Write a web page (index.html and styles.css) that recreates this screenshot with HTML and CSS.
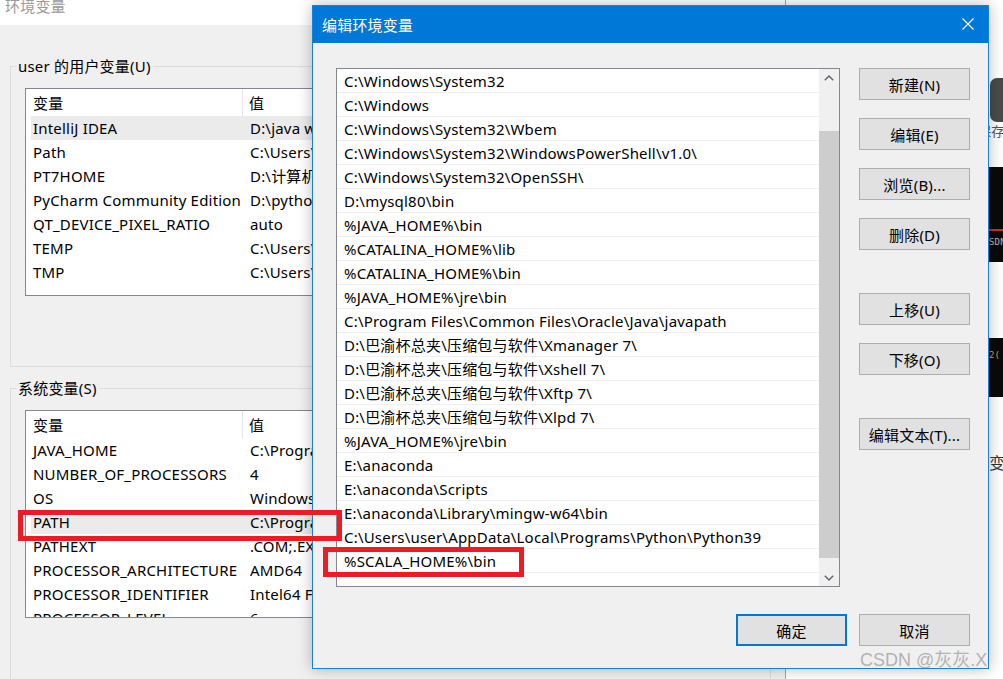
FILE: index.html
```html
<!DOCTYPE html>
<html lang="zh-CN">
<head>
<meta charset="utf-8">
<title>编辑环境变量</title>
<link rel="stylesheet" href="styles.css">
</head>
<body>
<div class="desk">

  <section class="envwin">
    <div class="envwin-title">环境变量</div>
    <div class="envwin-body">
      <div class="group group-user">
        <div class="group-label">user 的用户变量(U)</div>
        <div class="lv">
          <div class="lv-head"><span class="c1">变量</span><span class="c2">值</span></div>
          <div class="lv-row sel"><span class="c1">IntelliJ IDEA</span><span class="c2">D:\java  work\IntelliJ IDEA 2021.2\bin;</span></div>
          <div class="lv-row"><span class="c1">Path</span><span class="c2">C:\Users\user\AppData\Local\Microsoft\WindowsApps;</span></div>
          <div class="lv-row"><span class="c1">PT7HOME</span><span class="c2">D:\计算机网络\Cisco Packet Tracer 7.2.2</span></div>
          <div class="lv-row"><span class="c1">PyCharm Community Edition</span><span class="c2">D:\python\PyCharm Community Edition 2021.1\bin;</span></div>
          <div class="lv-row"><span class="c1">QT_DEVICE_PIXEL_RATIO</span><span class="c2">auto</span></div>
          <div class="lv-row"><span class="c1">TEMP</span><span class="c2">C:\Users\user\AppData\Local\Temp</span></div>
          <div class="lv-row"><span class="c1">TMP</span><span class="c2">C:\Users\user\AppData\Local\Temp</span></div>
        </div>
      </div>

      <div class="group group-sys">
        <div class="group-label">系统变量(S)</div>
        <div class="lv lv-sys">
          <div class="lv-head"><span class="c1">变量</span><span class="c2">值</span></div>
          <div class="lv-row"><span class="c1">JAVA_HOME</span><span class="c2">C:\Program Files\Java\jdk1.8.0_291</span></div>
          <div class="lv-row"><span class="c1">NUMBER_OF_PROCESSORS</span><span class="c2">4</span></div>
          <div class="lv-row"><span class="c1">OS</span><span class="c2">Windows_NT</span></div>
          <div class="lv-row sel"><span class="c1">PATH</span><span class="c2">C:\Program Files\Common Files\Oracle\Java\javapath;</span></div>
          <div class="lv-row"><span class="c1">PATHEXT</span><span class="c2">.COM;.EXE;.BAT;.CMD;.VBS;.VBE;.JS;.JSE;.WSF;.WSH;.MSC</span></div>
          <div class="lv-row"><span class="c1">PROCESSOR_ARCHITECTURE</span><span class="c2">AMD64</span></div>
          <div class="lv-row"><span class="c1">PROCESSOR_IDENTIFIER</span><span class="c2">Intel64 Family 6 Model 142 Stepping 10, GenuineIntel</span></div>
          <div class="lv-row"><span class="c1">PROCESSOR_LEVEL</span><span class="c2">6</span></div>
        </div>
      </div>
    </div>
  </section>

  <section class="sideapp">
    <div class="sa-icon"></div>
    <div class="sa-text">保存</div>
    <div class="sa-black">
      <div class="sa-red"></div>
      <div class="sa-small">SDN</div>
    </div>
    <div class="sa-black sa-black2"><div class="sa-small sa-orange">2(</div></div>
    <div class="sa-char">变</div>
  </section>

  <section class="dialog">
    <div class="dlg-title">
      <span>编辑环境变量</span>
      <svg class="dlg-close" width="12" height="12" viewBox="0 0 12 12"><path d="M0.5 0.5 L11.5 11.5 M11.5 0.5 L0.5 11.5" stroke="#fff" stroke-width="1.1" fill="none"/></svg>
    </div>
    <div class="dlg-body">
      <div class="dlg-main">
        <div class="pathlist">
          <div class="pl-rows">
            <div class="pl-row">C:\Windows\System32</div>
            <div class="pl-row">C:\Windows</div>
            <div class="pl-row">C:\Windows\System32\Wbem</div>
            <div class="pl-row">C:\Windows\System32\WindowsPowerShell\v1.0\</div>
            <div class="pl-row">C:\Windows\System32\OpenSSH\</div>
            <div class="pl-row">D:\mysql80\bin</div>
            <div class="pl-row">%JAVA_HOME%\bin</div>
            <div class="pl-row">%CATALINA_HOME%\lib</div>
            <div class="pl-row">%CATALINA_HOME%\bin</div>
            <div class="pl-row">%JAVA_HOME%\jre\bin</div>
            <div class="pl-row">C:\Program Files\Common Files\Oracle\Java\javapath</div>
            <div class="pl-row">D:\巴渝杯总夹\压缩包与软件\Xmanager 7\</div>
            <div class="pl-row">D:\巴渝杯总夹\压缩包与软件\Xshell 7\</div>
            <div class="pl-row">D:\巴渝杯总夹\压缩包与软件\Xftp 7\</div>
            <div class="pl-row">D:\巴渝杯总夹\压缩包与软件\Xlpd 7\</div>
            <div class="pl-row">%JAVA_HOME%\jre\bin</div>
            <div class="pl-row">E:\anaconda</div>
            <div class="pl-row">E:\anaconda\Scripts</div>
            <div class="pl-row">E:\anaconda\Library\mingw-w64\bin</div>
            <div class="pl-row">C:\Users\user\AppData\Local\Programs\Python\Python39</div>
            <div class="pl-row">%SCALA_HOME%\bin</div>
          </div>
          <div class="pl-scroll">
            <div class="sb-btn"><svg width="10" height="6" viewBox="0 0 10 6"><path d="M0.8 5.2 L5 1 L9.2 5.2" stroke="#606060" stroke-width="1.4" fill="none"/></svg></div>
            <div class="sb-space-top"></div>
            <div class="sb-thumb"></div>
            <div class="sb-space-bottom"></div>
            <div class="sb-btn"><svg width="10" height="6" viewBox="0 0 10 6"><path d="M0.8 0.8 L5 5 L9.2 0.8" stroke="#606060" stroke-width="1.4" fill="none"/></svg></div>
          </div>
        </div>
        <div class="side">
          <button class="btn">新建(N)</button>
          <button class="btn">编辑(E)</button>
          <button class="btn">浏览(B)...</button>
          <button class="btn">删除(D)</button>
          <button class="btn btn-sep">上移(U)</button>
          <button class="btn">下移(O)</button>
          <button class="btn btn-sep">编辑文本(T)...</button>
        </div>
      </div>
      <div class="dlg-foot">
        <button class="btn btn-primary">确定</button>
        <button class="btn">取消</button>
      </div>
    </div>
  </section>

  <div class="mark mark-path"></div>
  <div class="mark mark-scala"></div>
  <div class="watermark">CSDN @灰灰.X</div>
</div>
</body>
</html>
```

FILE: styles.css
```css
* { box-sizing: border-box; }
html, body { margin: 0; padding: 0; }
body {
  width: 1003px;
  height: 679px;
  overflow: hidden;
  background: #fff;
  font-family: "Noto Sans", "Noto Sans CJK SC", sans-serif;
  font-size: 15px;
  letter-spacing: 0.2px;
  color: #000;
}
.desk { position: relative; width: 1003px; height: 679px; overflow: hidden; }

/* background window */
.envwin {
  position: absolute;
  left: 0;
  top: 0;
  width: 786px;
  height: 700px;
  background: #f0f0f0;
  border-right: 1px solid #a8a8a8;
}
.envwin-title {
  height: 25px;
  background: #fff;
  color: #9a9a9a;
  padding-left: 5px;
  line-height: 12px;
}
.envwin-body { padding-left: 10px; }
.group {
  width: 761px;
  border: 1px solid #dcdcdc;
  padding: 0 14px;
}
.group-user { margin-top: 41px; height: 301px; }
.group-sys { margin-top: 21px; height: 400px; }
.group-label {
  width: fit-content;
  margin: -11px 0 0 -9px;
  padding: 0 2px;
  line-height: 20px;
  background: #f0f0f0;
}
.lv {
  margin-top: 12px;
  width: 730px;
  height: 208px;
  border: 1px solid #828790;
  background: #fff;
  overflow: hidden;
}
.lv-sys { margin-top: 12px; }
.lv-head {
  display: grid;
  grid-template-columns: 217px 1fr;
  height: 27px;
}
.lv-head span { padding: 4px 0 0 7px; line-height: 20px; }
.lv-head .c1 { border-right: 1px solid #e5e5e5; }
.lv-head .c2 { padding-left: 6px; }
.lv-row {
  display: grid;
  grid-template-columns: 217px 1fr;
  height: 24px;
  line-height: 24px;
  margin-left: 5px;
  white-space: nowrap;
}
.lv-row span { padding-left: 2px; }
.lv-row .c1 { overflow: hidden; }
.lv-row.sel { background: #ebebeb; }

/* app behind on the right */
.sideapp {
  position: absolute;
  left: 960px;
  top: 0;
  width: 60px;
  height: 679px;
  background: #fff;
  padding-top: 78px;
}
.sa-icon {
  margin-left: 30px;
  width: 30px;
  height: 44px;
  background: #4a4a4a;
  border-radius: 7px 0 0 7px;
}
.sa-text {
  margin-left: 18px;
  font-size: 13px;
  line-height: 18px;
  color: #555;
}
.sa-black {
  margin-top: 27px;
  height: 95px;
  background: #0a0a0a;
  padding-top: 62px;
}
.sa-red { height: 2px; background: #d92a2a; margin-left: 28px; }
.sa-small {
  margin: 6px 0 0 29px;
  font-family: "DejaVu Sans Mono", monospace;
  font-size: 9px;
  line-height: 10px;
  color: #bbb;
}
.sa-black2 { margin-top: 76px; height: 59px; padding-top: 12px; }
.sa-orange { margin-top: 0; color: #d8a060; }
.sa-char {
  margin: 57px 0 0 29px;
  font-size: 16px;
  line-height: 18px;
  color: #333;
}

/* dialog */
.dialog {
  position: absolute;
  left: 312px;
  top: 5px;
  width: 677px;
  height: 664px;
  border: 1px solid #1a7fd6;
  background: #f0f0f0;
  box-shadow: 0 0 14px rgba(0, 0, 0, 0.28);
  display: flex;
  flex-direction: column;
}
.dlg-title {
  height: 37px;
  flex: none;
  background: #0078d7;
  color: #fff;
  display: flex;
  align-items: center;
  justify-content: space-between;
  padding: 0 14px 1px 9px;
}
.dlg-close { display: block; }
.dlg-body {
  flex: 1;
  padding: 25px 18px 22px 23px;
  display: flex;
  flex-direction: column;
}
.dlg-main { display: flex; gap: 19px; }
.pathlist {
  width: 504px;
  height: 519px;
  border: 1px solid #828790;
  background: #fff;
  display: flex;
}
.pl-rows { flex: 1; overflow: hidden; }
.pl-row {
  height: 24px;
  border-bottom: 1px solid #f0f0f0;
  padding: 1px 0 0 7px;
  line-height: 22px;
  white-space: nowrap;
}
.pl-scroll {
  width: 20px;
  background: #f0f0f0;
  display: flex;
  flex-direction: column;
}
.sb-btn {
  height: 17px;
  display: flex;
  align-items: center;
  justify-content: center;
}
.sb-space-top { height: 45px; }
.sb-thumb { height: 427px; background: #cdcdcd; }
.sb-space-bottom { flex: 1; }

.side {
  width: 111px;
  display: flex;
  flex-direction: column;
  gap: 18px;
}
.btn {
  height: 32px;
  width: 111px;
  padding: 0;
  background: #e1e1e1;
  border: 1px solid #adadad;
  font: inherit;
  letter-spacing: inherit;
  color: #000;
  display: flex;
  align-items: center;
  justify-content: center;
}
.btn-sep { margin-top: 25px; }
.btn-primary { border: 2px solid #0078d7; }
.dlg-foot {
  display: flex;
  justify-content: flex-end;
  gap: 12px;
  margin-top: 27px;
}

/* annotations */
.mark {
  position: absolute;
  border: 5px solid #ed1c24;
}
.mark-path { left: 18px; top: 510px; width: 324px; height: 31px; }
.mark-scala { left: 323px; top: 547px; width: 201px; height: 30px; }
.watermark {
  position: absolute;
  left: 860px;
  top: 650px;
  font-family: "Liberation Sans", "Noto Sans CJK SC", sans-serif;
  font-size: 18px;
  line-height: 20px;
  letter-spacing: 0;
  color: rgba(150, 150, 150, 0.7);
  white-space: nowrap;
}
```
